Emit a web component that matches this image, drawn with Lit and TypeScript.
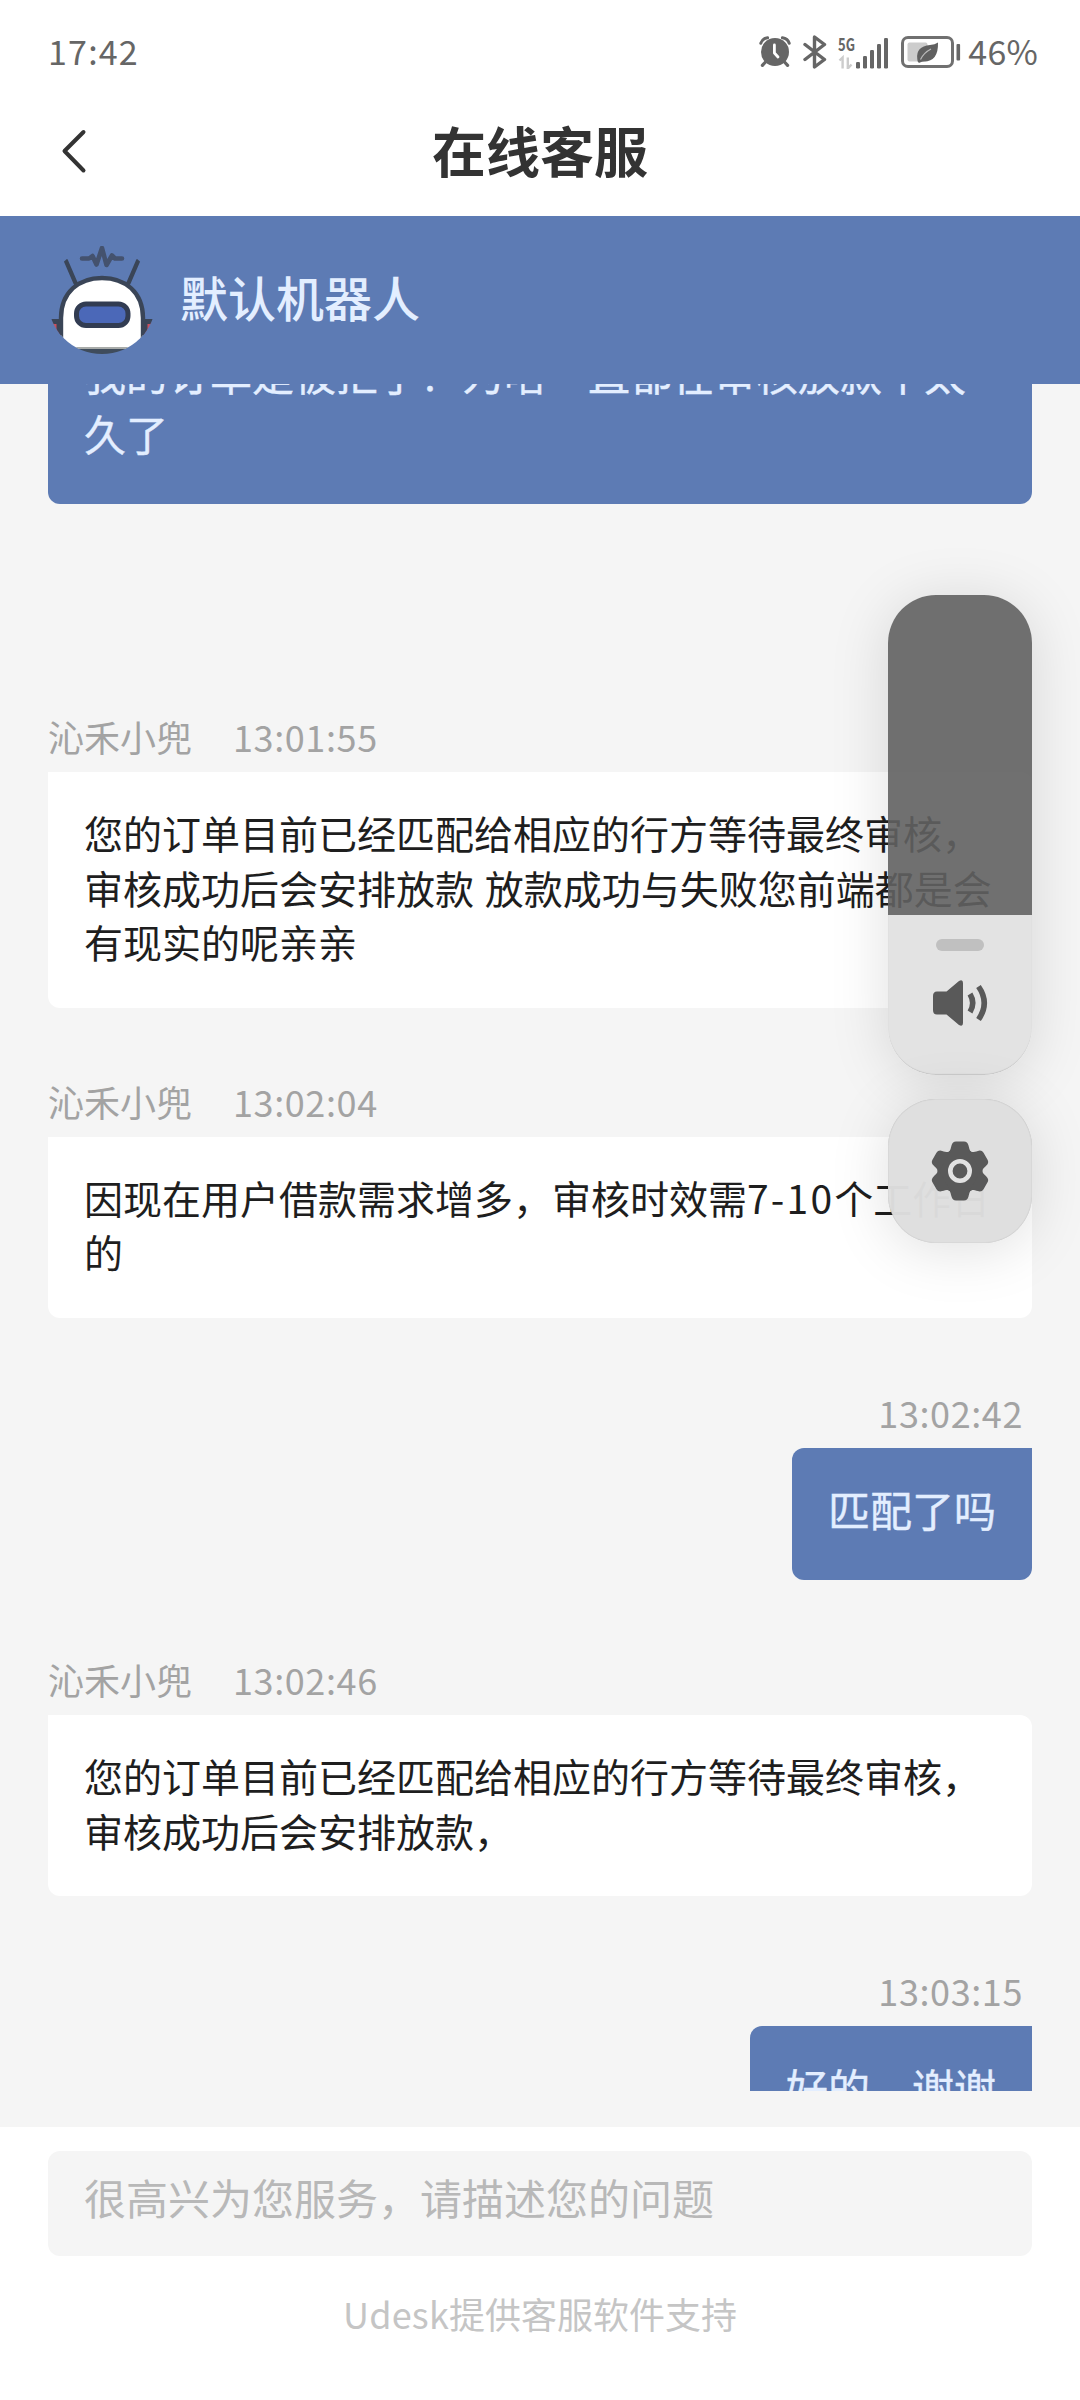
import { LitElement, html, css, svg, nothing } from "lit";
import { customElement, property } from "lit/decorators.js";
import { classMap } from "lit/directives/class-map.js";

interface Message {
  from: "agent" | "me";
  time?: string;
  text: unknown;
  spacing: "first" | "after-blank" | "normal" | "reply" | "wide";
}

const AGENT = "沁禾小兜";

const MESSAGES: Message[] = [
  { from: "me", text: "我的订单是被拒了？为啥一直都在审核放款中太久了", spacing: "first" },
  {
    from: "agent",
    time: "13:01:55",
    text: "您的订单目前已经匹配给相应的行方等待最终审核，审核成功后会安排放款 放款成功与失败您前端都是会有现实的呢亲亲",
    spacing: "after-blank",
  },
  {
    from: "agent",
    time: "13:02:04",
    text: html`因现在用户借款需求增多，审核时效需<span class="num">7-10</span>个工作日的`,
    spacing: "normal",
  },
  { from: "me", time: "13:02:42", text: "匹配了吗", spacing: "reply" },
  {
    from: "agent",
    time: "13:02:46",
    text: "您的订单目前已经匹配给相应的行方等待最终审核，审核成功后会安排放款，",
    spacing: "wide",
  },
  { from: "me", time: "13:03:15", text: "好的　谢谢", spacing: "reply" },
];

@customElement("status-bar")
export class StatusBar extends LitElement {
  static styles = css`
    :host {
      display: flex;
      align-items: center;
      justify-content: space-between;
      height: 104px;
      padding: 0 42px 0 48px;
      box-sizing: border-box;
      font-size: 34px;
      line-height: 50px;
      color: #666;
    }
    .clock {
      letter-spacing: 1.2px;
      margin-top: -3px;
    }
    .icons {
      display: flex;
      align-items: center;
    }
    .icons svg {
      display: block;
    }
    .alarm { margin-right: 12px; }
    .bt { margin-right: 11px; }
    .signal { margin-right: 12px; }
    .battery { margin-right: 7px; }
    .percent {
      letter-spacing: 0.2px;
      margin-top: -3px;
    }
  `;

  render() {
    return html`
      <span class="clock">17:42</span>
      <div class="icons">
        <svg class="alarm" width="32" height="34" viewBox="0 0 32 34">
          <g fill="none" stroke="#666" stroke-linecap="round">
            <path d="M1.8 8.2Q3.2 3.6 8.6 2.8M30.2 8.2Q28.8 3.6 23.4 2.8" stroke-width="3" />
            <path d="M6.5 27L3.4 30.4M25.5 27L28.6 30.4" stroke-width="3.2" />
          </g>
          <circle cx="16" cy="17" r="14" fill="#666" />
          <path d="M15.4 10V18L19 22" fill="none" stroke="#fff" stroke-width="2.8" stroke-linecap="round" stroke-linejoin="round" />
        </svg>
        <svg class="bt" width="24" height="36" viewBox="0 0 24 36">
          <path d="M2 10.5L21.5 25.5L11.5 33V3L21.5 10.5L2 25.5" fill="none" stroke="#666" stroke-width="3.4" stroke-linecap="round" stroke-linejoin="round" />
        </svg>
        <svg class="signal" width="51" height="34" viewBox="0 0 51 34">
          <text x="0" y="16" font-size="17.5" font-weight="700" fill="#666" textLength="17" lengthAdjust="spacingAndGlyphs">5G</text>
          <path d="M1.5 25.5L4.600 22.5V33.5M9.800 22.5V33.5L13.500 29.500" fill="none" stroke="#ccc" stroke-width="2.4" />
          ${[
            [18, 27],
            [25, 21],
            [32, 15],
            [39, 9],
            [46, 3],
          ].map(([x, y]) => svg`<rect x=${x} y=${y} width="4" height=${33.5 - y} rx="1.2" fill="#666" />`)}
        </svg>
        <svg class="battery" width="60" height="34" viewBox="0 0 60 34">
          <rect x="1.5" y="2.5" width="50" height="29" rx="5.500" fill="none" stroke="#707070" stroke-width="3" />
          <rect x="6.5" y="7.5" width="20" height="19" rx="2" fill="#ccc" />
          <path d="M37 7.500Q37.500 26.500 23 26.500Q21 26.500 19 27.500Q16.500 28.500 16.300 24Q14.500 11.500 29 10Q34 9.500 37 7.500Z" fill="#606060" />
          <path d="M19.500 24.500Q23 17.500 30 14" fill="none" stroke="#bbb" stroke-width="1.200" />
          <rect x="55.500" y="9" width="3.600" height="16.500" rx="1" fill="#666" />
        </svg>
        <span class="percent">46%</span>
      </div>
    `;
  }
}

@customElement("bot-avatar")
export class BotAvatar extends LitElement {
  static styles = css`
    :host {
      display: block;
      width: 108px;
      height: 108px;
      border-radius: 50%;
      overflow: hidden;
    }
    svg {
      display: block;
    }
  `;

  render() {
    return html`
      <svg width="108" height="108" viewBox="0 0 108 108">
        <path d="M34 12.500H41L44.500 10L48.500 18.500L54 2L58.500 19L64 9.500L67 12.500H74" fill="none" stroke="#44526e" stroke-width="4.600" stroke-linecap="round" stroke-linejoin="round" />
        <path d="M18 15L27.500 37M90 15L80.500 37" stroke="#3a4557" stroke-width="4.400" stroke-linecap="round" />
        <rect x="2" y="76" width="11" height="24" fill="#c9505f" />
        <rect x="95" y="76" width="11" height="24" fill="#c9505f" />
        <path d="M3 73H14V106H8.500V78H3ZM105 73H94V106H99.500V78H105Z" fill="#3a4557" />
        <rect x="10" y="102" width="88" height="8" fill="#3f4c5c" />
        <path d="M13 103V72C13 46 31 32 54 32S95 46 95 72V103Z" fill="#fff" />
        <path d="M13 106V72C13 46 31 32 54 32S95 46 95 72V106" fill="none" stroke="#3a4557" stroke-width="4.400" />
        <path d="M15 102H93" stroke="#8b8f8d" stroke-width="1.600" />
        <rect x="28.500" y="58" width="51.500" height="21.500" rx="9.500" fill="#4b68b8" stroke="#323c52" stroke-width="5" />
      </svg>
    `;
  }
}

@customElement("chat-message")
export class ChatMessage extends LitElement {
  @property({ attribute: false }) message!: Message;

  static styles = css`
    .row {
      display: flex;
      flex-direction: column;
      align-items: flex-start;
    }
    .first { margin-top: -72px; }
    .after-blank { margin-top: 206px; }
    .normal { margin-top: 67px; }
    .reply { margin-top: 68px; }
    .wide { margin-top: 73px; }
    .me { align-items: flex-end; }
    .meta {
      display: flex;
      gap: 41px;
      height: 51px;
      margin-bottom: 11px;
      font-size: 36px;
      line-height: 52px;
      color: #a3a3a3;
    }
    .me .meta { padding-right: 9px; }
    .time { letter-spacing: 0.6px; }
    .bubble {
      box-sizing: border-box;
      width: 984px;
      padding: 33px 36px 39px;
      border-radius: 0 12px 12px 12px;
      background: #fff;
      color: #1e1e1e;
      font-size: 39px;
      line-height: 54.6px;
      word-spacing: 2px;
    }
    .me .bubble {
      width: auto;
      max-width: 984px;
      padding: 31px 36px 41px;
      border-radius: 12px 0 12px 12px;
      background: #5d7bb4;
      color: #e3eeff;
      font-size: 42px;
      line-height: 60px;
      -webkit-text-stroke: 0.4px #e3eeff;
    }
    .num { letter-spacing: 2.200px; }
  `;

  render() {
    const m = this.message;
    return html`
      <div class=${classMap({ row: true, me: m.from === "me", [m.spacing]: true })}>
        ${m.time
          ? html`<div class="meta">
              ${m.from === "agent" ? html`<span>${AGENT}</span>` : nothing}
              <span class="time">${m.time}</span>
            </div>`
          : nothing}
        <div class="bubble">${m.text}</div>
      </div>
    `;
  }
}

@customElement("volume-panel")
export class VolumePanel extends LitElement {
  static styles = css`
    :host {
      display: flex;
      flex-direction: column;
      gap: 24px;
      width: 144px;
    }
    .slider,
    .settings {
      border-radius: 48px;
      overflow: hidden;
      box-shadow: 0 6px 60px rgba(0, 0, 0, 0.13);
    }
    .slider {
      height: 480px;
      display: flex;
      flex-direction: column;
    }
    .empty {
      height: 320px;
      background: rgba(96, 96, 96, 0.9);
    }
    .level {
      flex: 1;
      display: flex;
      flex-direction: column;
      align-items: center;
      border-radius: 0 0 48px 48px;
      box-shadow: inset 0 -1px 1px rgba(0, 0, 0, 0.12);
      background: #e3e3e3;
    }
    .handle {
      width: 48px;
      height: 12px;
      margin-top: 24px;
      border-radius: 6px;
      background: #c0c0c0;
    }
    .speaker {
      display: block;
      margin-top: 28px;
    }
    .settings {
      height: 144px;
      display: flex;
      align-items: center;
      justify-content: center;
      background: rgba(222, 222, 222, 0.975);
      box-shadow: inset 0 0 1px rgba(0, 0, 0, 0.3), 0 6px 60px rgba(0, 0, 0, 0.13);
    }
  `;

  render() {
    const teeth = [0, 60, 120, 180, 240, 300];
    return html`
      <div class="slider">
        <div class="empty"></div>
        <div class="level">
          <div class="handle"></div>
          <svg class="speaker" width="56" height="48" viewBox="0 0 56 48">
            <path d="M1 17Q1 12.500 5 12.500H14.500L27 2Q31 0 31 4V44Q31 48 27 46L14.500 35.500H5Q1 35.500 1 31Z" fill="#595959" />
            <g fill="none" stroke="#595959" stroke-width="5.600">
              <path d="M38 15Q43.500 24 38 33" />
              <path d="M46.500 7.500Q58 24 46.500 40.500" />
            </g>
          </svg>
        </div>
      </div>
      <div class="settings">
        <svg width="60" height="60" viewBox="-30 -30 60 60">
          <circle r="22.500" fill="#595959" />
          ${teeth.map(
            (a) => svg`<path d="M-12.500 -18C-9.500 -20 -9.500 -22 -8.500 -25.500Q-7.500 -29.500 -4 -29.500H4Q7.500 -29.500 8.500 -25.500C9.500 -22 9.500 -20 12.500 -18Z" fill="#595959" transform=${`rotate(${a})`} />`
          )}
          <circle r="9.700" fill="#595959" stroke="#e2e2e2" stroke-width="4.600" />
        </svg>
      </div>
    `;
  }
}

@customElement("app-root")
export class AppRoot extends LitElement {
  static styles = css`
    :host {
      display: flex;
      flex-direction: column;
      position: relative;
      width: 1080px;
      height: 2400px;
      overflow: hidden;
      background: #fff;
      font-family: "Noto Sans CJK SC", "Noto Sans", sans-serif;
    }
    .title-bar {
      display: grid;
      grid-template-columns: 120px 1fr 120px;
      align-items: center;
      height: 112px;
      padding-bottom: 18px;
      box-sizing: border-box;
    }
    .back {
      display: block;
      margin-left: 60px;
    }
    .title {
      margin: -3px 0 0;
      text-align: center;
      font-size: 54px;
      line-height: 70px;
      font-weight: 700;
      color: #333;
    }
    .agent-bar {
      display: flex;
      align-items: center;
      gap: 24px;
      height: 168px;
      padding-left: 48px;
      background: #5d7bb4;
      color: #e3eeff;
      font-size: 48px;
      font-weight: 500;
      line-height: 68px;
    }
    .agent-name {
      margin-top: -8px;
    }
    .chat {
      height: 1707px;
      padding: 0 48px;
      overflow: hidden;
      background: #f5f5f5;
    }
    .chat-edge {
      height: 36px;
      background: #f5f5f5;
    }
    .composer {
      display: flex;
      flex-direction: column;
      align-items: center;
      padding: 24px 48px 0;
    }
    .input {
      align-self: stretch;
      height: 105px;
      padding: 16px 36px 0;
      box-sizing: border-box;
      border-radius: 12px;
      background: #f5f5f5;
      color: #b8b8b8;
      font-size: 42px;
      line-height: 60px;
    }
    .powered {
      margin-top: 32px;
      font-size: 36px;
      line-height: 50px;
      color: #c5c5c5;
    }
    .latin {
      letter-spacing: 0.200px;
    }
    .volume {
      position: absolute;
      top: 595px;
      left: 888px;
    }
  `;

  render() {
    return html`
      <status-bar></status-bar>
      <div class="title-bar">
        <svg class="back" width="28" height="46" viewBox="0 0 28 46">
          <path d="M23.500 4L4.500 23L23.500 42.500" fill="none" stroke="#333" stroke-width="4" stroke-linecap="round" stroke-linejoin="round" />
        </svg>
        <h1 class="title">在线客服</h1>
      </div>
      <div class="agent-bar">
        <bot-avatar></bot-avatar>
        <span class="agent-name">默认机器人</span>
      </div>
      <div class="chat" lang="zh-CN">
        ${MESSAGES.map((m) => html`<chat-message .message=${m}></chat-message>`)}
      </div>
      <div class="chat-edge"></div>
      <div class="composer">
        <div class="input">很高兴为您服务，请描述您的问题</div>
        <div class="powered"><span class="latin">Udesk</span>提供客服软件支持</div>
      </div>
      <volume-panel class="volume"></volume-panel>
    `;
  }
}
